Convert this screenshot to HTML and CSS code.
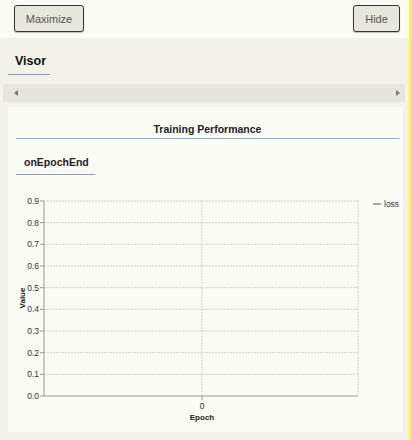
FILE: index.html
```html
<!DOCTYPE html>
<html>
<head>
<meta charset="utf-8">
<link rel="stylesheet" href="styles.css">
</head>
<body>
<div class="visor">
  <div class="header">
    <button class="btn btn-max">Maximize</button>
    <button class="btn btn-hide">Hide</button>
  </div>
  <div class="body">
    <div class="visor-title">Visor</div>
    <div class="tabs">
      <svg class="arrow" width="4" height="6" viewBox="0 0 4 6"><path d="M4 0 L0 3 L4 6 Z"/></svg>
      <svg class="arrow" width="4" height="6" viewBox="0 0 4 6"><path d="M0 0 L4 3 L0 6 Z"/></svg>
    </div>
    <div class="card">
      <div class="card-title">Training Performance</div>
      <div class="sub-title">onEpochEnd</div>
      <svg class="chart" width="396" height="245" viewBox="0 0 396 245">
        <g class="grid">
          <line x1="36" y1="16" x2="350" y2="16"/>
          <line x1="36" y1="37.7" x2="350" y2="37.7"/>
          <line x1="36" y1="59.3" x2="350" y2="59.3"/>
          <line x1="36" y1="81" x2="350" y2="81"/>
          <line x1="36" y1="102.7" x2="350" y2="102.7"/>
          <line x1="36" y1="124.3" x2="350" y2="124.3"/>
          <line x1="36" y1="146" x2="350" y2="146"/>
          <line x1="36" y1="167.7" x2="350" y2="167.7"/>
          <line x1="36" y1="189.3" x2="350" y2="189.3"/>
          <line x1="194" y1="16" x2="194" y2="211"/>
          <line x1="350" y1="16" x2="350" y2="211"/>
        </g>
        <g class="axis">
          <line x1="36" y1="16" x2="36" y2="211"/>
          <line x1="36" y1="211" x2="350" y2="211"/>
          <line x1="32" y1="16" x2="36" y2="16"/>
          <line x1="32" y1="37.7" x2="36" y2="37.7"/>
          <line x1="32" y1="59.3" x2="36" y2="59.3"/>
          <line x1="32" y1="81" x2="36" y2="81"/>
          <line x1="32" y1="102.7" x2="36" y2="102.7"/>
          <line x1="32" y1="124.3" x2="36" y2="124.3"/>
          <line x1="32" y1="146" x2="36" y2="146"/>
          <line x1="32" y1="167.7" x2="36" y2="167.7"/>
          <line x1="32" y1="189.3" x2="36" y2="189.3"/>
          <line x1="32" y1="211" x2="36" y2="211"/>
          <line x1="194" y1="211" x2="194" y2="215"/>
        </g>
        <g class="ticks">
          <text x="31" y="19">0.9</text>
          <text x="31" y="40.7">0.8</text>
          <text x="31" y="62.3">0.7</text>
          <text x="31" y="84">0.6</text>
          <text x="31" y="105.7">0.5</text>
          <text x="31" y="127.3">0.4</text>
          <text x="31" y="149">0.3</text>
          <text x="31" y="170.7">0.2</text>
          <text x="31" y="192.3">0.1</text>
          <text x="31" y="214">0.0</text>
        </g>
        <text class="xtick" x="194" y="224">0</text>
        <text class="axis-label" x="194" y="235">Epoch</text>
        <text class="axis-label" transform="translate(17,113) rotate(-90)">Value</text>
        <line class="legend-line" x1="365" y1="19" x2="373" y2="19"/>
        <text class="legend-text" x="376" y="22">loss</text>
      </svg>
    </div>
  </div>
</div>
</body>
</html>
```
FILE: styles.css
```css
html, body {
  margin: 0;
  padding: 0;
}
body {
  width: 412px;
  height: 440px;
  overflow: hidden;
  background: #f2f2eb;
  font-family: "Liberation Sans", Arial, sans-serif;
}
.visor {
  width: 409px;
  height: 440px;
  border-right: 3px solid #f3ee6a;
  background: #f2f2eb;
}
.header {
  height: 38px;
  background: #fcfcf6;
  display: flex;
  justify-content: space-between;
  align-items: flex-start;
  padding: 5px 9px 0 14px;
  box-sizing: border-box;
}
.btn {
  height: 27px;
  border: 1px solid #333;
  border-radius: 3px;
  background: #e7e7de;
  color: #555;
  font-family: "Liberation Sans", Arial, sans-serif;
  font-size: 11px;
  padding: 0;
  box-shadow: 0 1px 1px rgba(0,0,0,0.25);
}
.btn-max { width: 70px; }
.btn-hide { width: 47px; }
.body {
  padding: 0;
}
.visor-title {
  margin: 15px 0 0 8px;
  width: 42px;
  padding: 0 0 0 7px;
  box-sizing: border-box;
  font-size: 12.5px;
  font-weight: bold;
  color: #111;
  line-height: 17px;
  height: 22px;
  border-bottom: 1px solid #8e9cc4;
}
.tabs {
  margin: 9px 4px 0 3px;
  height: 18px;
  background: #e6e6de;
  display: flex;
  justify-content: space-between;
  align-items: center;
  padding: 0 5px 0 11px;
}
.arrow {
  display: block;
  fill: #777;
}
.card {
  margin: 5px 6px 0 8px;
  height: 325px;
  background: #fcfcf6;
  padding-top: 1px;
  box-sizing: border-box;
}
.card-title {
  margin: 0 4px 0 8px;
  text-align: center;
  font-size: 10.5px;
  font-weight: bold;
  color: #222;
  padding-top: 15px;
  height: 31px;
  box-sizing: border-box;
  border-bottom: 1px solid #86aed4;
}
.sub-title {
  margin: 17px 0 0 8px;
  width: 79px;
  padding-left: 8px;
  box-sizing: border-box;
  font-size: 10.5px;
  font-weight: bold;
  color: #222;
  height: 19px;
  border-bottom: 1px solid #8e9cc4;
}
.chart {
  display: block;
  margin-top: 10px;
}
.grid line {
  stroke: #d2d2c8;
  stroke-width: 1;
  stroke-dasharray: 2 1;
}
.axis line {
  stroke: #9a9a92;
  stroke-width: 1;
}
.ticks text {
  font-family: "Liberation Sans", Arial, sans-serif;
  font-size: 8.5px;
  fill: #333;
  text-anchor: end;
}
.xtick {
  font-family: "Liberation Sans", Arial, sans-serif;
  font-size: 8.5px;
  fill: #333;
  text-anchor: middle;
}
.axis-label {
  font-family: "Liberation Sans", Arial, sans-serif;
  font-size: 8px;
  font-weight: bold;
  fill: #222;
  text-anchor: middle;
}
.legend-line {
  stroke: #555;
  stroke-width: 1;
}
.legend-text {
  font-family: "Liberation Sans", Arial, sans-serif;
  font-size: 8.5px;
  fill: #333;
}
```
